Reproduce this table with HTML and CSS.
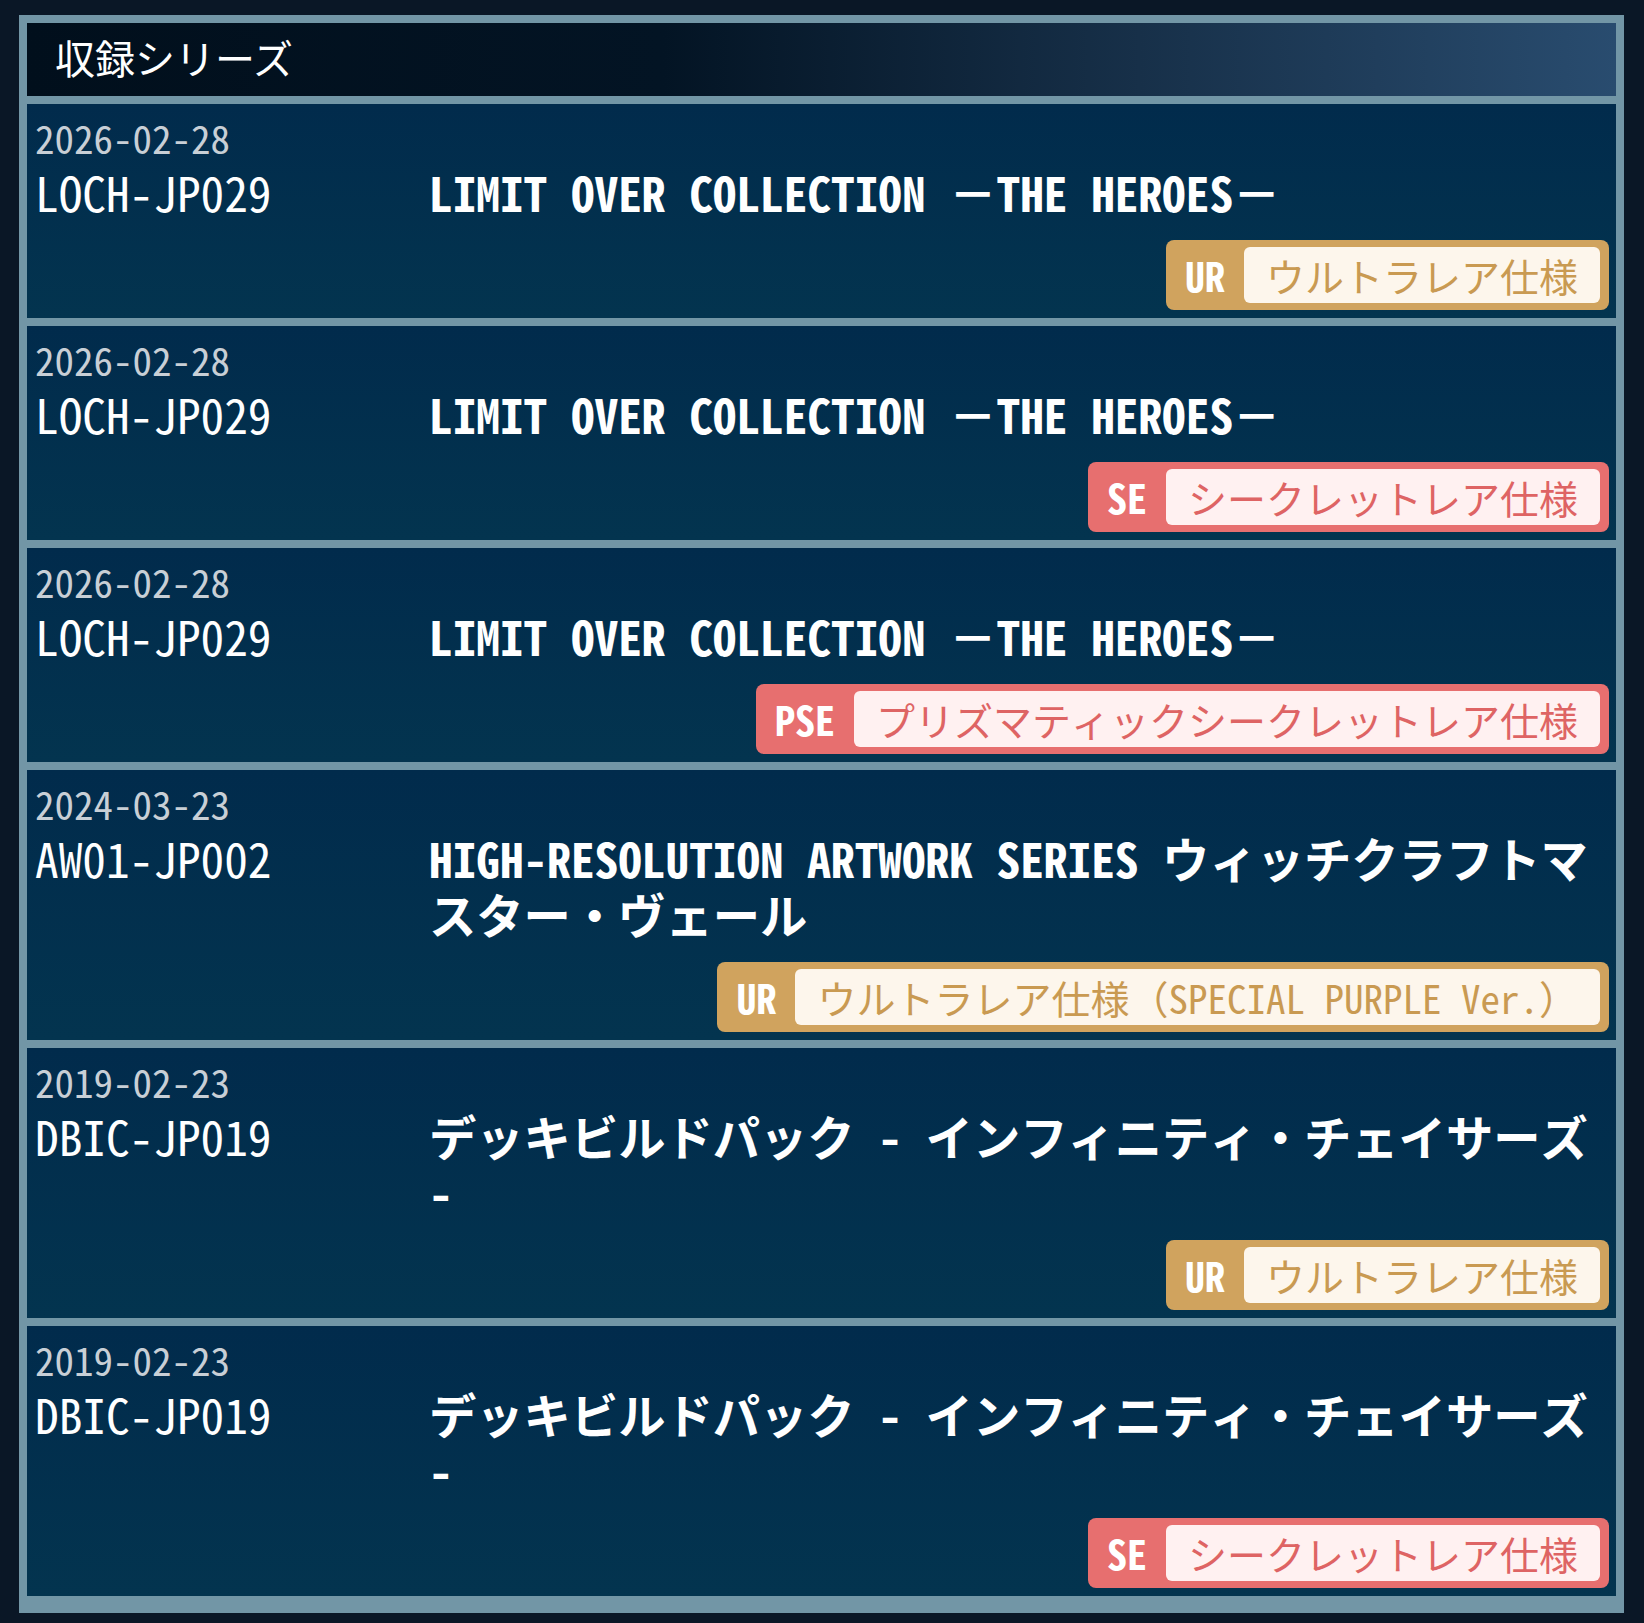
FILE: index.html
```html
<!DOCTYPE html>
<html lang="ja">
<head>
  <meta charset="UTF-8">
  <title>収録シリーズ</title>
  <link rel="stylesheet" href="styles.css">
</head>
<body>
  <div class="frame">
    <div class="head">収録シリーズ</div>

    <div class="row">
      <div class="date">2026-02-28</div>
      <div class="main">
        <div class="code">LOCH-JP029</div>
        <div class="info">
          <div class="title">LIMIT OVER COLLECTION －THE HEROES－</div>
          <div class="rarity gold"><span class="r-code">UR</span><span class="r-name">ウルトラレア仕様</span></div>
        </div>
      </div>
    </div>

    <div class="row">
      <div class="date">2026-02-28</div>
      <div class="main">
        <div class="code">LOCH-JP029</div>
        <div class="info">
          <div class="title">LIMIT OVER COLLECTION －THE HEROES－</div>
          <div class="rarity red"><span class="r-code">SE</span><span class="r-name">シークレットレア仕様</span></div>
        </div>
      </div>
    </div>

    <div class="row">
      <div class="date">2026-02-28</div>
      <div class="main">
        <div class="code">LOCH-JP029</div>
        <div class="info">
          <div class="title">LIMIT OVER COLLECTION －THE HEROES－</div>
          <div class="rarity red"><span class="r-code">PSE</span><span class="r-name">プリズマティックシークレットレア仕様</span></div>
        </div>
      </div>
    </div>

    <div class="row">
      <div class="date">2024-03-23</div>
      <div class="main">
        <div class="code">AW01-JP002</div>
        <div class="info">
          <div class="title">HIGH-RESOLUTION ARTWORK SERIES ウィッチクラフトマスター・ヴェール</div>
          <div class="rarity gold"><span class="r-code">UR</span><span class="r-name">ウルトラレア仕様（SPECIAL PURPLE Ver.）</span></div>
        </div>
      </div>
    </div>

    <div class="row">
      <div class="date">2019-02-23</div>
      <div class="main">
        <div class="code">DBIC-JP019</div>
        <div class="info">
          <div class="title">デッキビルドパック - インフィニティ・チェイサーズ -</div>
          <div class="rarity gold"><span class="r-code">UR</span><span class="r-name">ウルトラレア仕様</span></div>
        </div>
      </div>
    </div>

    <div class="row">
      <div class="date">2019-02-23</div>
      <div class="main">
        <div class="code">DBIC-JP019</div>
        <div class="info">
          <div class="title">デッキビルドパック - インフィニティ・チェイサーズ -</div>
          <div class="rarity red"><span class="r-code">SE</span><span class="r-name">シークレットレア仕様</span></div>
        </div>
      </div>
    </div>
  </div>
</body>
</html>
```

FILE: styles.css
```css
body {
  margin: 0;
  padding: 15px 20px 8px 19px;
  background: #0a1726;
  font-family: "Noto Sans Mono CJK JP", "Noto Sans CJK JP", monospace;
  color: #fff;
}
.frame {
  display: flex;
  flex-direction: column;
  gap: 8px;
  padding: 8px 8px 17px;
  background: #7296a6;
}
.head {
  height: 73px;
  box-sizing: border-box;
  display: flex;
  align-items: center;
  padding: 0 0 6px 28px;
  font-family: "Noto Sans CJK JP", sans-serif;
  font-size: 40px;
  background: linear-gradient(90deg, #010f1c 0%, #031424 40%, #173049 70%, #294c6f 100%);
}
.row {
  padding: 7px 7px 8px 8px;
  background: linear-gradient(180deg, #012b4c 0%, #03344f 100%);
}
.date {
  font-size: 39px;
  line-height: 53px;
  color: #c8cfd6;
}
.main {
  display: grid;
  grid-template-columns: 394px 1fr;
}
.code {
  font-size: 47.3px;
  line-height: 56px;
}
.info {
  display: flex;
  flex-direction: column;
  align-items: flex-end;
}
.title {
  align-self: stretch;
  font-size: 47.3px;
  font-weight: bold;
  line-height: 56px;
}
.rarity {
  display: flex;
  align-items: center;
  margin-top: 20px;
  padding: 7px 9px 7px 0;
  border-radius: 8px;
}
.r-code {
  padding: 0 19px;
  font-size: 40px;
  line-height: 56px;
  font-weight: bold;
  color: #fff;
}
.r-name {
  height: 56px;
  line-height: 56px;
  padding: 0 22px;
  border-radius: 6px;
  font-size: 39px;
}
.gold { background: #d0a35e; }
.gold .r-name { background: #fdf6ec; color: #c99a52; }
.red { background: #e76f6f; }
.red .r-name { background: #fff1f1; color: #de6464; }
```
